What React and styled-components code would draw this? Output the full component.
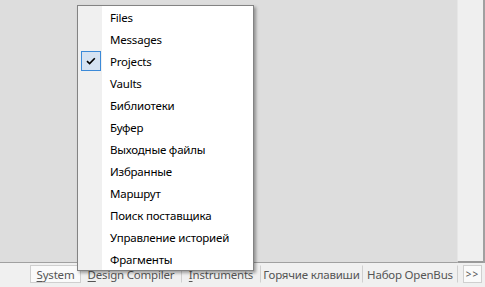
import React from "react";
import styled, { createGlobalStyle } from "styled-components";

const GlobalStyle = createGlobalStyle`
  html, body {
    margin: 0;
    padding: 0;
    background: #f0f0f0;
  }
  body {
    font-family: "Noto Sans", "Open Sans", sans-serif;
    font-size: 11.5px;
    letter-spacing: -0.2px;
    color: #000;
  }
`;

const menuItems = [
  { label: "Files" },
  { label: "Messages" },
  { label: "Projects", checked: true },
  { label: "Vaults" },
  { label: "Библиотеки" },
  { label: "Буфер" },
  { label: "Выходные файлы" },
  { label: "Избранные" },
  { label: "Маршрут" },
  { label: "Поиск поставщика" },
  { label: "Управление историей" },
  { label: "Фрагменты" },
];

const tabs = [
  { label: "System", key: "S", width: 51, active: true },
  { label: "Design Compiler", key: "D", width: 101 },
  { label: "Instruments", key: "I", width: 79 },
  { label: "Горячие клавиши", width: 102 },
  { label: "Набор OpenBus", width: 95 },
];

const App = () => {
  return (
    <>
      <GlobalStyle />
      <Window>
        <Workspace>
          <Canvas />
          <SidePanel />
          <EdgeStrip />
        </Workspace>
        <TabBar>
          <TabList>
            {tabs.map((tab) => (
              <Tab key={tab.label} $active={tab.active} $width={tab.width}>
                {tab.key ? (
                  <>
                    <u>{tab.key}</u>
                    {tab.label.slice(1)}
                  </>
                ) : (
                  tab.label
                )}
              </Tab>
            ))}
          </TabList>
          <MoreButton>&gt;&gt;</MoreButton>
        </TabBar>

        <PopupMenu>
          {menuItems.map((item) => (
            <MenuItem key={item.label}>
              <IconCell>
                {item.checked && (
                  <CheckBox>
                    <svg width="10" height="8" viewBox="0 0 10 8">
                      <path
                        d="M1 4.2 L3.6 6.6 L8.8 1.2"
                        fill="none"
                        stroke="#000"
                        strokeWidth="1.6"
                      />
                    </svg>
                  </CheckBox>
                )}
              </IconCell>
              <Label>{item.label}</Label>
            </MenuItem>
          ))}
        </PopupMenu>
      </Window>
    </>
  );
};

const Window = styled.div`
  position: relative;
  width: 485px;
  height: 287px;
  display: flex;
  flex-direction: column;
  overflow: hidden;
  background: #f0f0f0;
`;

const Workspace = styled.div`
  display: flex;
  height: 262px;
  border-bottom: 1px solid #a0a0a0;
`;

const Canvas = styled.div`
  flex: 1;
  background: #dddddd;
`;

const SidePanel = styled.div`
  width: 25px;
  background: #efefef;
  border-left: 1px solid #e6e6e6;
  border-bottom: 2px solid #9a9a9a;
  margin-bottom: -1px;
`;

const EdgeStrip = styled.div`
  width: 2px;
  background: #a0a0a0;
`;

const TabBar = styled.div`
  flex: 1;
  display: flex;
  align-items: flex-start;
  padding: 2px 2px 0 30px;
  gap: 5px;
`;

const TabList = styled.div`
  display: flex;
  height: 18px;
`;

const Tab = styled.div`
  width: ${(p) => p.$width}px;
  height: 18px;
  line-height: 17px;
  box-sizing: border-box;
  text-align: center;
  white-space: nowrap;
  border: 1px solid ${(p) => (p.$active ? "#cfcfcf" : "transparent")};
  border-right-color: #cfcfcf;
  background: ${(p) => (p.$active ? "#fafafa" : "transparent")};
  color: #555;

  & + & {
    border-left: none;
  }

  u {
    text-decoration: underline;
    text-underline-offset: 2px;
  }
`;

const MoreButton = styled.div`
  width: 19px;
  height: 18px;
  box-sizing: border-box;
  border: 1px solid #cfcfcf;
  background: #fafafa;
  color: #555;
  font-size: 10px;
  line-height: 16px;
  text-align: center;
  letter-spacing: 1px;
`;

const PopupMenu = styled.div`
  position: absolute;
  left: 77px;
  top: 5px;
  width: 177px;
  box-sizing: border-box;
  border: 1px solid #838383;
  background: #ffffff;
  box-shadow: 2px 2px 3px rgba(0, 0, 0, 0.35);
  display: flex;
  flex-direction: column;
`;

const MenuItem = styled.div`
  display: flex;
  align-items: center;
  height: 22px;
`;

const IconCell = styled.div`
  width: 24px;
  height: 100%;
  background: #f0f0f0;
  display: flex;
  align-items: center;
  justify-content: center;
`;

const CheckBox = styled.div`
  width: 20px;
  height: 20px;
  box-sizing: border-box;
  border: 1px solid #3c8ad8;
  background: #d6e3f2;
  display: flex;
  align-items: center;
  justify-content: center;
  margin-left: 2px;
`;

const Label = styled.span`
  padding-left: 8px;
  white-space: nowrap;
  color: #000;
`;

export default App;
